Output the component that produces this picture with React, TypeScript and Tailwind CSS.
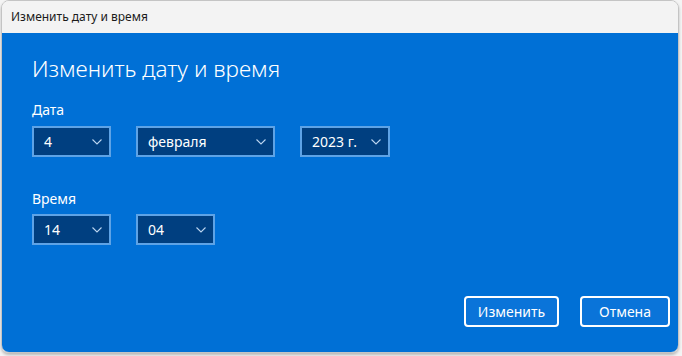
const font = { fontFamily: '"Noto Sans", "Open Sans", sans-serif' };

function Chevron(): JSX.Element {
  return (
    <svg width="10" height="6" viewBox="0 0 10 6" fill="none" className="text-[#b9d3ee]">
      <path d="M0.5 0.5 L5 5 L9.5 0.5" stroke="currentColor" strokeWidth="1.1" />
    </svg>
  );
}

function Select({ value, width }: { value: string; width: string }): JSX.Element {
  return (
    <div
      className={`flex h-[31px] ${width} items-center justify-between border-2 border-[#5ea3e6] bg-[#003f80] pl-[10px] pr-[7px] text-[14px] text-white`}
    >
      <span>{value}</span>
      <Chevron />
    </div>
  );
}

function Button({ label, width }: { label: string; width: string }): JSX.Element {
  return (
    <button
      className={`flex h-[31px] ${width} items-center justify-center rounded-[4px] border-2 border-white bg-[#0a74d9] text-[14px] text-white`}
    >
      {label}
    </button>
  );
}

export default function App(): JSX.Element {
  return (
    <div className="h-[356px] w-[682px] bg-[#f4f4f4] pl-[1px] pr-[3px] pb-[3px]" style={font}>
      <div className="flex h-[353px] flex-col overflow-hidden rounded-[8px] border border-[#c4c4c4] shadow-[0_2px_3px_rgba(0,0,0,0.25)]">
        <div className="flex h-[32px] shrink-0 items-center bg-[#f3f3f3] pl-[9px] text-[12px] text-[#1b1b1b]">
          Изменить дату и время
        </div>
        <div className="flex flex-1 flex-col bg-[#0070d6] pl-[30px] pr-[8px] text-white">
          <h1 className="mt-[20px] text-[22.5px] font-light leading-[32px]">
            Изменить дату и время
          </h1>
          <p className="mt-[15px] text-[14px] leading-[20px]">Дата</p>
          <div className="mt-[6px] flex gap-[25px]">
            <Select value="4" width="w-[79px]" />
            <Select value="февраля" width="w-[139px]" />
            <Select value="2023 г." width="w-[90px]" />
          </div>
          <p className="mt-[32px] text-[14px] leading-[20px]">Время</p>
          <div className="mt-[5px] flex gap-[25px]">
            <Select value="14" width="w-[79px]" />
            <Select value="04" width="w-[79px]" />
          </div>
          <div className="mt-[51px] flex justify-end gap-[21px]">
            <Button label="Изменить" width="w-[95px]" />
            <Button label="Отмена" width="w-[90px]" />
          </div>
        </div>
      </div>
    </div>
  );
}
